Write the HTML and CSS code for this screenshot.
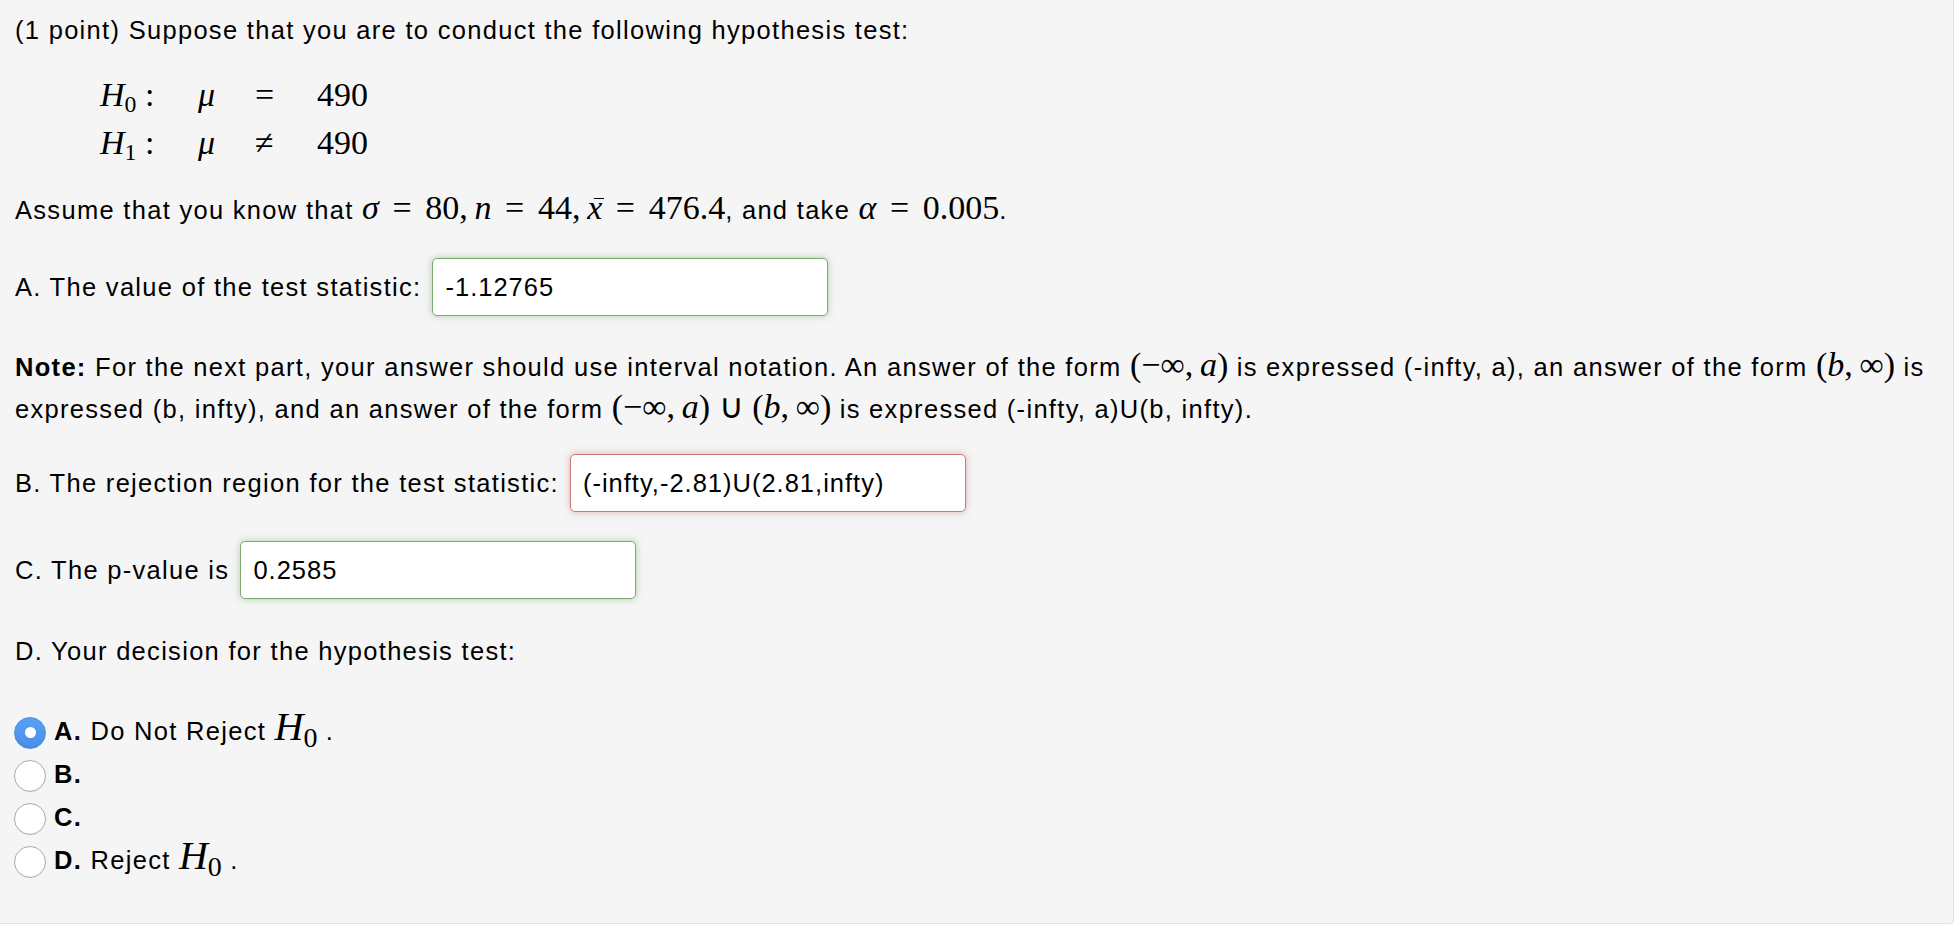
FILE: index.html
```html
<!DOCTYPE html>
<html>
<head>
<meta charset="utf-8">
<link rel="stylesheet" href="styles.css">
</head>
<body>
<div class="panel">
  <p class="intro">(1 point) Suppose that you are to conduct the following hypothesis test:</p>
  <div class="hyp">
    <span class="m"><i>H</i><sub>0</sub> :</span><span class="m"><i>μ</i></span><span class="m">=</span><span class="m">490</span>
    <span class="m"><i>H</i><sub>1</sub> :</span><span class="m"><i>μ</i></span><span class="m">≠</span><span class="m">490</span>
  </div>
  <p class="assume">Assume that you know that <span class="m"><i>σ</i><span class="rel">=</span>80<span class="cm">,</span><i>n</i><span class="rel">=</span>44<span class="cm">,</span><i class="xbar">x</i><span class="rel">=</span>476.4</span>, and take <span class="m"><i>α</i><span class="rel">=</span>0.005</span>.</p>
  <div class="qrow row-a"><span>A. The value of the test statistic:</span><span class="ans ok">-1.12765</span></div>
  <p class="note"><b>Note:</b> For the next part, your answer should use interval notation. An answer of the form <span class="m">(−∞<span class="cm">,</span><i>a</i>)</span> is expressed (-infty, a), an answer of the form <span class="m">(<i>b</i><span class="cm">,</span>∞)</span> is expressed (b, infty), and an answer of the form <span class="m">(−∞<span class="cm">,</span><i>a</i>)<span class="bin">∪</span>(<i>b</i><span class="cm">,</span>∞)</span> is expressed (-infty, a)U(b, infty).</p>
  <div class="qrow row-b"><span>B. The rejection region for the test statistic:</span><span class="ans bad">(-infty,-2.81)U(2.81,infty)</span></div>
  <div class="qrow row-c"><span>C. The p-value is</span><span class="ans ok">0.2585</span></div>
  <p class="decide">D. Your decision for the hypothesis test:</p>
  <ul class="choices">
    <li><span class="radio on"></span><span class="opt"><b>A.</b> Do Not Reject <span class="m h"><i>H</i><sub>0</sub></span> .</span></li>
    <li><span class="radio"></span><span class="opt"><b>B.</b></span></li>
    <li><span class="radio"></span><span class="opt"><b>C.</b></span></li>
    <li><span class="radio"></span><span class="opt"><b>D.</b> Reject <span class="m h"><i>H</i><sub>0</sub></span> .</span></li>
  </ul>
</div>
</body>
</html>
```
FILE: styles.css
```css
html, body {
  margin: 0;
  padding: 0;
  background: #ffffff;
}
body {
  font-family: "Liberation Sans", Arial, sans-serif;
  font-size: 25.5px;
  letter-spacing: 1.3px;
  color: #000;
}
.panel {
  width: 1954px;
  height: 924px;
  box-sizing: border-box;
  background: #f5f5f5;
  border-right: 1px solid #e1e1e1;
  border-bottom: 1px solid #e1e1e1;
  border-bottom-right-radius: 4px;
  padding: 15px 0 0 15px;
}
p { margin: 0; }
.intro {
  line-height: 30px;
}
.m {
  font-family: "Liberation Serif", "Times New Roman", serif;
  font-size: 34px;
  line-height: 1;
  letter-spacing: 0;
}
.m sub {
  font-size: 0.7em;
  font-style: normal;
  vertical-align: -0.25em;
  line-height: 0;
}
.rel {
  margin: 0 0.4em;
}
.bin {
  margin: 0 0.25em;
}
.cm {
  margin-right: 0.2em;
}
.hyp {
  margin: 26px 0 0 85px;
  display: grid;
  grid-template-columns: 98px 57px 62px auto;
  grid-auto-rows: 48px;
  align-items: baseline;
}
.hyp .m {
  font-size: 34px;
  line-height: 48px;
}
.assume {
  margin-top: 23px;
  line-height: 40px;
}
.xbar {
  position: relative;
}
.xbar::after {
  content: "";
  position: absolute;
  left: 0.2em;
  width: 0.3em;
  top: 0.26em;
  height: 1.5px;
  background: #000;
}
.qrow {
  display: flex;
  align-items: center;
  gap: 11px;
}
.row-a { margin-top: 28px; }
.row-b { margin-top: 24px; }
.row-c { margin-top: 29px; }
.ans {
  box-sizing: border-box;
  width: 396px;
  height: 58px;
  background: #fff;
  border-radius: 5px;
  padding: 0 12px;
  display: flex;
  align-items: center;
  letter-spacing: 1px;
}
.ans.ok {
  border: 1.5px solid #7ca872;
  box-shadow: 0 0 7px rgba(110, 165, 100, 0.5);
}
.ans.bad {
  border: 1.5px solid #cc7877;
  box-shadow: 0 0 7px rgba(205, 110, 110, 0.5);
}
.note {
  margin-top: 30px;
  line-height: 42px;
  padding-right: 4px;
}
.note .m {
  line-height: 0;
}
.decide {
  margin-top: 37px;
  line-height: 30px;
}
.choices {
  list-style: none;
  margin: 45px 0 0 -1px;
  padding: 0;
}
.choices li {
  height: 43px;
  display: flex;
  align-items: center;
  gap: 8px;
}
.opt {
  line-height: 30px;
  margin-top: -4px;
}
.radio {
  box-sizing: border-box;
  width: 32px;
  height: 32px;
  border-radius: 50%;
  background: #fff;
  border: 1px solid #ababab;
  box-shadow: inset 0 -1px 1px rgba(0,0,0,0.05);
  display: flex;
  align-items: center;
  justify-content: center;
}
.radio.on {
  background: linear-gradient(#5a9ff3, #4a8eea);
  border-color: #4a8fe8;
}
.radio.on::after {
  content: "";
  width: 11px;
  height: 11px;
  border-radius: 50%;
  background: #fff;
}
.choices .h {
  font-size: 40px;
  line-height: 0;
}
```
